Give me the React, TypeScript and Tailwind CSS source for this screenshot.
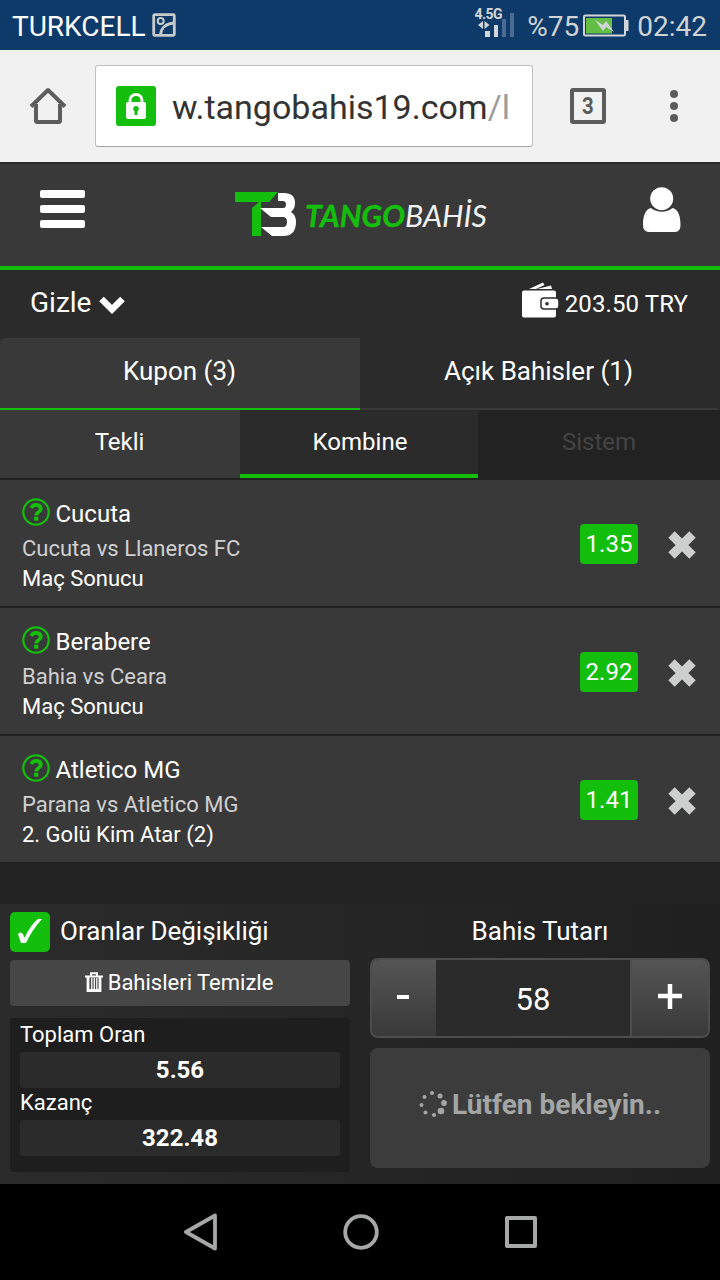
const bets = [
  { pick: "Cucuta", match: "Cucuta vs Llaneros FC", market: "Maç Sonucu", odd: "1.35" },
  { pick: "Berabere", match: "Bahia vs Ceara", market: "Maç Sonucu", odd: "2.92" },
  { pick: "Atletico MG", match: "Parana vs Atletico MG", market: "2. Golü Kim Atar (2)", odd: "1.41" },
]

function StatusBar() {
  return (
    <div className="flex h-[50px] items-center bg-[#0e3a69] pt-1 pl-3 pr-[13px] text-[28px] leading-none text-white">
      <span>TURKCELL</span>
      <svg className="ml-[6px] mb-1" width="24" height="24" viewBox="0 0 24 24" fill="none" stroke="#c6cbcc" strokeWidth="2.8">
        <rect x="1.7" y="1.7" width="20.6" height="20.6" rx="1" />
        <circle cx="8.7" cy="8" r="3" strokeWidth="2" />
        <path d="M8.5 22C9 15 14 10.5 22 10" />
      </svg>
      <div className="flex-1" />
      <svg className="mb-2 mr-px" width="42" height="32" viewBox="0 0 42 32" fill="#d2d6d8">
        <text x="0.5" y="12" fontFamily="Roboto, sans-serif" fontSize="14" fontWeight="700" textLength="28">4.5G</text>
        <path d="M4 18l5-4v8zM15.500 18l-5-4v8z" />
        <rect x="11" y="24" width="5" height="6" />
        <rect x="20" y="18" width="4" height="12" />
        <rect x="28" y="12" width="4" height="18" fill="#4a6c92" />
        <rect x="36" y="6" width="4" height="24" fill="#4a6c92" />
      </svg>
      <span className="ml-[10px] text-[#d0d4d5]">%75</span>
      <svg className="ml-1 mb-[3px]" width="46" height="24" viewBox="0 0 46 24">
        <rect x="1" y="1.500" width="41" height="20" rx="1.500" fill="none" stroke="#d2d6d8" strokeWidth="2" />
        <path d="M43 6h2.500v11H43z" fill="#d2d6d8" />
        <rect x="3" y="4" width="26" height="15.500" fill="#63be45" />
        <path d="M12 6l8 5 3-4 8 11-8-5-3 4z" fill="#d2d6d8" />
      </svg>
      <span className="ml-2 text-[#d0d4d5]">02:42</span>
    </div>
  )
}

function BrowserBar() {
  return (
    <div className="flex h-[112px] items-center bg-[#f1f1f1]">
      <svg className="ml-[29px]" width="38" height="38" viewBox="0 0 38 38" fill="none" stroke="#5c5c5c" strokeWidth="4" strokeLinejoin="round">
        <path d="M2 19.500L19 3l17 16.500" />
        <path d="M7 17v16.500q0 1.500 1.500 1.500h21q1.500 0 1.500-1.500V17" />
      </svg>
      <div className="ml-7 flex h-[82px] w-[438px] items-center overflow-hidden rounded-[3px] border border-[#bcc0bf] border-b-[#a2a6a5] bg-white pl-5">
        <svg width="40" height="40" viewBox="0 0 40 40">
          <rect width="40" height="40" rx="3" fill="#14be0c" />
          <path d="M14 18v-4a6 5.500 0 0 1 12 0v4" fill="none" stroke="#fff" strokeWidth="2.800" />
          <rect x="10" y="16" width="20" height="17" rx="2" fill="#fff" />
          <path d="M20 20a2.800 2.800 0 0 1 1.500 5.200V29h-3v-3.800A2.800 2.800 0 0 1 20 20z" fill="#14be0c" />
        </svg>
        <div className="ml-4 pt-px text-[34px] leading-[44px] whitespace-nowrap text-[#333]">
          w.tangobahis19.com<span className="text-[#9a9e9d]">/l</span>
        </div>
      </div>
      <div className="ml-[37px] flex h-9 w-9 items-center justify-center rounded-[3px] border-4 border-[#5c5c5c]">
        <span className="scale-x-85 text-[24px] leading-none font-bold text-[#5c5c5c]">3</span>
      </div>
      <div className="ml-16 flex flex-col gap-1">
        <div className="h-2 w-2 rounded-full bg-[#5c5c5c]" />
        <div className="h-2 w-2 rounded-full bg-[#5c5c5c]" />
        <div className="h-2 w-2 rounded-full bg-[#5c5c5c]" />
      </div>
    </div>
  )
}

function Logo() {
  return (
    <svg className="mr-[5px] mb-[5px]" width="256" height="54" viewBox="0 0 256 54">
      <path d="M1 7H44L35 17H27V51H18V23L25 17H1z" fill="#14be0c" />
      <path d="M44 8h6q11 0 11 10 0 6-4 9 5 3 5 10 0 14-13 14H38l-11-9h22q4 0 4-5t-4-5H37l-11-9h23q3 0 3-3.500T49 16h-5z" fill="#fff" />
      <text x="71" y="42" fontFamily="Lato, sans-serif" fontSize="30.500" fontWeight="700" fontStyle="italic" fill="#14be0c" stroke="#14be0c" strokeWidth="0.400" textLength="100" lengthAdjust="spacingAndGlyphs">TANGO</text>
      <text x="171" y="42" fontFamily="Lato, sans-serif" fontSize="30.500" fontStyle="italic" fill="#f2f2f2" textLength="82" lengthAdjust="spacingAndGlyphs">BAHİS</text>
    </svg>
  )
}

function SiteHeader() {
  return (
    <header className="flex h-[108px] items-center justify-between border-b-4 border-[#14be0c] bg-[#393939] pl-10 pr-[39px] shadow-[inset_0_2px_0_#2c2c2c]">
      <div className="mb-[11px] flex w-[45px] flex-col gap-[7px]">
        <div className="h-2 rounded-[2px] bg-white" />
        <div className="h-2 rounded-[2px] bg-white" />
        <div className="h-2 rounded-[2px] bg-white" />
      </div>
      <Logo />
      <svg className="mb-2" width="38" height="46" viewBox="0 0 38 46" fill="#fff">
        <path d="M8 21C2 22 0 30 0 38q0 7 6 7h26q5.500 0 5.500-7c0-8-2-16-8-17-6 5-15 5-21.500 0z" />
        <circle cx="18.700" cy="11.700" r="11.500" />
      </svg>
    </header>
  )
}

function BalanceRow() {
  return (
    <div className="flex h-[68px] items-center bg-[#2b2b2b] pl-[30px] pr-8 text-white">
      <span className="mb-[2px] text-[28px] leading-none">Gizle</span>
      <svg className="ml-2 mt-px" width="26" height="20" viewBox="0 0 26 20" fill="none" stroke="#fff" strokeWidth="6.5">
        <path d="M2.500 4L13 14.500 23.500 4" />
      </svg>
      <div className="flex-1" />
      <svg className="mb-[9px]" width="38" height="36" viewBox="0 0 38 36" fill="#fff">
        <path d="M7 7L21 0.500l1.500 2.500L14 7zM15 7l14-3.500 1 3.500z" />
        <rect x="0" y="8.500" width="34" height="27" rx="2" />
        <rect x="19" y="16" width="18" height="11" rx="3" stroke="#2b2b2b" strokeWidth="1.500" />
        <circle cx="25" cy="21.700" r="1.800" fill="#2b2b2b" />
      </svg>
      <span className="ml-[5px] text-[24px] leading-none tracking-[0.1px]">203.50 TRY</span>
    </div>
  )
}

function Tabs() {
  return (
    <>
      <div className="flex h-[72px] bg-[#2b2b2b] text-[26px] leading-[66px] text-white">
        <div className="w-[360px] rounded-tl-[6px] border-b-2 border-[#14be0c] bg-[#393939] pr-px text-center">Kupon (3)</div>
        <div className="w-[358px] border-b-2 border-[#393939] pr-px text-center">Açık Bahisler (1)</div>
      </div>
      <div className="flex h-[70px] border-b-2 border-[#222] bg-[#222] text-center text-[24px] leading-[64px] text-white">
        <div className="w-[240px] bg-[#393939] pr-px">Tekli</div>
        <div className="w-[238px] border-b-4 border-[#14be0c] bg-[#2b2b2b] pl-[2px]">Kombine</div>
        <div className="w-[242px] text-[#444]">Sistem</div>
      </div>
    </>
  )
}

function BetRow({ bet }: { bet: (typeof bets)[number] }) {
  return (
    <div className="flex h-[126px] bg-[#393939] pl-[22px] pr-6 text-white">
      <div className="flex-1 pt-[18px]">
        <div className="flex h-[30px] items-center">
          <svg className="mb-[2px]" width="28" height="28" viewBox="0 0 28 28" fill="none" stroke="#14be0c">
            <circle cx="14" cy="14" r="12.700" strokeWidth="2.200" />
            <path d="M9.300 10C11.500 5 18.800 6.500 18.800 11c0 3-4.600 3-4.600 6.500" strokeWidth="3.800" />
            <path d="M14.200 18.700v4" strokeWidth="4.200" />
          </svg>
          <span className="ml-[5.5px] pt-[2px] text-[24px] leading-[30px]">{bet.pick}</span>
        </div>
        <div className="pt-[6px] text-[22px] leading-[30px] text-[#d0d0d0]">{bet.match}</div>
        <div className="text-[22px] leading-[30px]">{bet.market}</div>
      </div>
      <div className="mt-11 h-10 w-[58px] rounded-[4px] bg-[#14be0c] text-center text-[24px] leading-10">{bet.odd}</div>
      <svg className="mt-[51px] ml-[30px]" width="28" height="28" viewBox="0 0 28 28" stroke="#cccfce" strokeWidth="9" strokeLinejoin="round">
        <path d="M3.500 3.500l21 21M24.500 3.500l-21 21" />
      </svg>
    </div>
  )
}

// dots grow clockwise to suggest rotation
const dots = [
  [13, 3, 2.1], [21, 6, 2.5], [25, 13, 2.9], [22, 21, 3.3],
  [15, 25, 2.1], [6.5, 22.5, 2], [2.5, 15, 2], [5.5, 7, 2],
]

function BetSlip() {
  return (
    <div className="flex h-[280px] bg-linear-to-r from-[#2b2b2b] to-[#202020] px-[10px] pt-2 text-white">
      <div className="w-[340px]">
        <div className="flex h-10 items-center">
          <svg width="40" height="40" viewBox="0 0 40 40">
            <rect width="40" height="40" rx="5" fill="#14be0c" />
            <path d="M8 22q2-3 5 0l1.500 4Q21 12 28 7h4Q22 18 16 31h-5z" fill="#fff" />
          </svg>
          <span className="ml-[10px] mb-[2px] text-[26px] leading-none">Oranlar Değişikliği</span>
        </div>
        <button className="mt-2 flex h-[46px] w-full items-center justify-center rounded-[4px] bg-[#464646] pr-[2px] text-[22px] leading-none">
          <svg className="mb-[2px] mr-[5px]" width="18" height="20" viewBox="0 0 18 20" fill="none" stroke="#fff">
            <path d="M0 4.500h18M6 4V1.200h6V4" strokeWidth="2" />
            <path d="M3 5v13.500h12V5" strokeWidth="2.800" />
            <path d="M6.800 6v12M9.300 6v12M11.800 6v12" strokeWidth="1.300" />
          </svg>
          Bahisleri Temizle
        </button>
        <div className="mt-3 h-[154px] rounded-[4px] bg-[#1e1e1e] px-[10px] text-[22px]">
          <div className="h-[34px] leading-[33px]">Toplam Oran</div>
          <div className="h-9 rounded-[3px] bg-[#2b2b2b] text-center text-[24px] leading-9 font-bold">5.56</div>
          <div className="h-8 leading-[29px]">Kazanç</div>
          <div className="h-9 rounded-[3px] bg-[#2b2b2b] text-center text-[24px] leading-9 font-bold">322.48</div>
        </div>
      </div>
      <div className="ml-5 w-[340px]">
        <div className="h-[46px] text-center text-[26px] leading-[38px]">Bahis Tutarı</div>
        <div className="flex h-20 overflow-hidden rounded-[8px] border-2 border-[#4d4d4d] bg-[#2b2b2b]">
          <div className="flex w-16 justify-center bg-linear-to-b from-[#555] to-[#393939] pt-[35px] pr-[2px]">
            <div className="h-1 w-3 bg-white" />
          </div>
          <div className="flex-1 text-center text-[31px] leading-[80px]">58</div>
          <div className="flex w-[78px] justify-center border-l-2 border-[#4d4d4d] bg-linear-to-b from-[#555] to-[#393939] pt-6">
            <svg width="24" height="25" viewBox="0 0 24 25" stroke="#fff" strokeWidth="4.5">
              <path d="M12 0v25M0 12h24" />
            </svg>
          </div>
        </div>
        <button className="mt-[10px] flex h-[120px] w-full items-center justify-center rounded-[8px] bg-[#3c3c3c] pb-[6px] text-[28px] leading-none font-bold text-[#a3a6a5]">
          <svg className="mr-[5px] mb-[3px]" width="28" height="28" viewBox="0 0 28 28" fill="#a3a6a5">
            {dots.map(([x, y, r]) => (
              <circle key={`${x}-${y}`} cx={x} cy={y} r={r} />
            ))}
          </svg>
          Lütfen bekleyin..
        </button>
      </div>
    </div>
  )
}

function NavBar() {
  return (
    <div className="flex h-24 items-center bg-black pl-[184px]">
      <svg width="34" height="38" viewBox="0 0 34 38" fill="none" stroke="#a6a8a8" strokeWidth="3.800" strokeLinejoin="round">
        <path d="M2 19L31 2.500v33z" />
      </svg>
      <svg className="ml-[125px]" width="36" height="36" viewBox="0 0 36 36" fill="none" stroke="#a6a8a8" strokeWidth="3.800">
        <circle cx="18" cy="18" r="15.800" />
      </svg>
      <svg className="ml-[126px]" width="32" height="32" viewBox="0 0 32 32" fill="none" stroke="#a6a8a8" strokeWidth="4" strokeLinejoin="round">
        <rect x="2" y="2" width="28" height="28" />
      </svg>
    </div>
  )
}

export default function App() {
  return (
    <div className="w-[720px] overflow-hidden bg-[#222] font-['Roboto','Noto_Sans',sans-serif]">
      <StatusBar />
      <BrowserBar />
      <SiteHeader />
      <BalanceRow />
      <Tabs />
      <div className="flex h-[424px] flex-col gap-[2px] bg-[#222]">
        {bets.map((bet) => (
          <BetRow key={bet.pick} bet={bet} />
        ))}
      </div>
      <BetSlip />
      <NavBar />
    </div>
  )
}
